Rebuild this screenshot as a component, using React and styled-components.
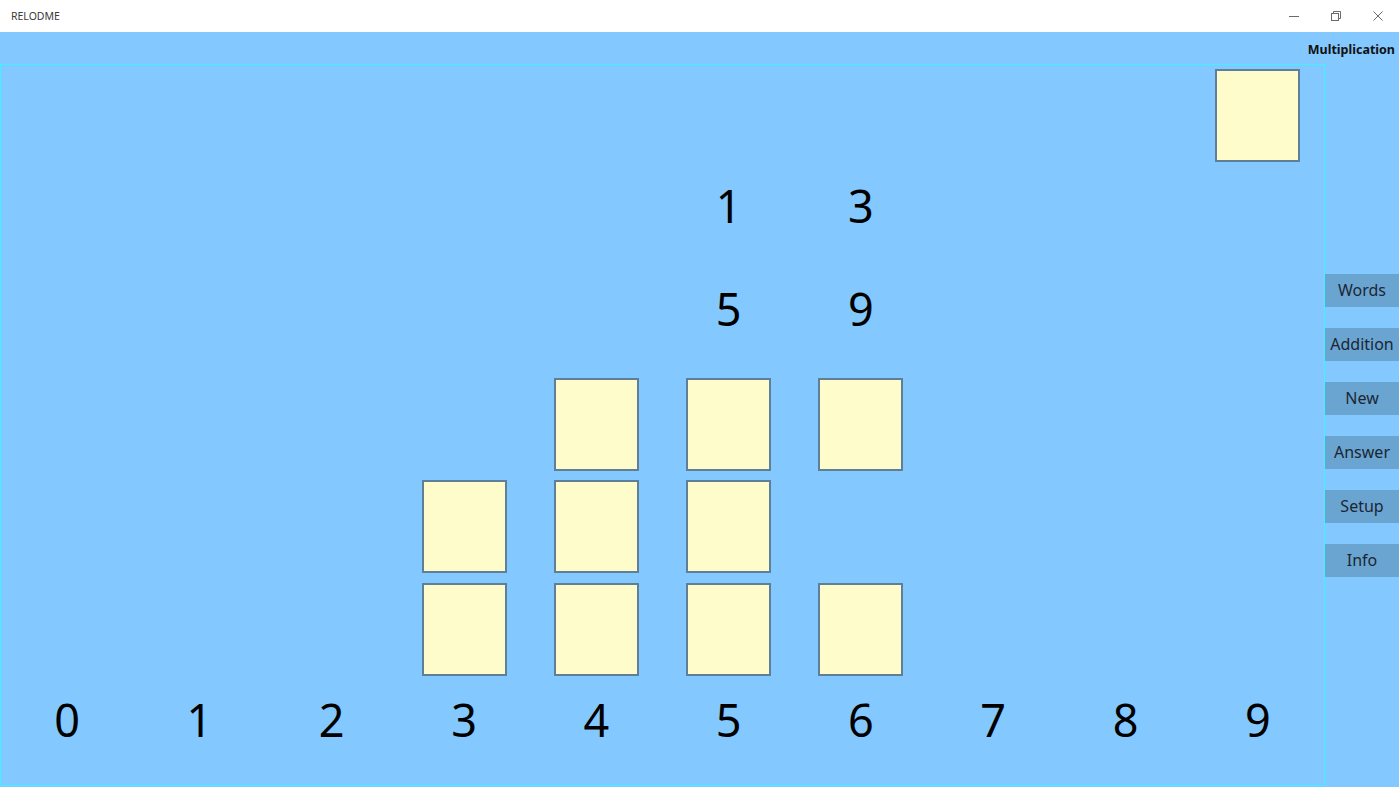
import React from "react";
import styled, {createGlobalStyle} from "styled-components";

const GlobalStyle = createGlobalStyle`
  html, body {
    margin: 0;
    padding: 0;
    overflow: hidden;
    background: #83c8fe;
  }
  * {
    box-sizing: border-box;
  }
`;

const Window = styled.div`
  width: 1399px;
  height: 787px;
  display: flex;
  flex-direction: column;
  font-family: "Noto Sans", "Open Sans", sans-serif;
`;

const TitleBar = styled.div`
  height: 32px;
  background: #ffffff;
  display: flex;
  align-items: center;
  justify-content: space-between;
  padding-left: 11px;
`;

const AppName = styled.span`
  font-size: 10.5px;
  color: #3a3a3a;
`;

const Controls = styled.div`
  display: flex;
  height: 100%;
`;

const ControlButton = styled.div`
  width: 42px;
  height: 100%;
  display: flex;
  align-items: center;
  justify-content: center;
  color: #6a6a6a;
`;

const Main = styled.div`
  flex: 1;
  background: #83c8fe;
  display: grid;
  grid-template-columns: 1325px 1fr;
  grid-template-rows: 32px 722px;
`;

const ModeLabel = styled.div`
  grid-column: 1 / 3;
  display: flex;
  align-items: center;
  justify-content: flex-end;
  padding-right: 4px;
  padding-top: 2px;
  font-size: 12.5px;
  font-weight: 700;
  color: #111;
`;

const Board = styled.div`
  border: 1px solid #3ef2ff;
  display: grid;
  grid-template-columns: repeat(10, 1fr);
  grid-template-rows: repeat(7, 1fr);
`;

const Tile = styled.div`
  grid-row: ${props => props.$row + 1};
  grid-column: ${props => props.$col + 1};
  justify-self: center;
  align-self: start;
  margin-top: 4px;
  width: 85px;
  height: 93px;
  background: #fffccc;
  border: 2px solid #5f7f99;
`;

const Digit = styled.div`
  grid-row: ${props => props.$row + 1};
  grid-column: ${props => props.$col + 1};
  justify-self: center;
  align-self: start;
  font-size: 45px;
  line-height: 76px;
  color: #000;
`;

const Sidebar = styled.div`
  display: flex;
  flex-direction: column;
  justify-content: center;
  gap: 21px;
`;

const SideButton = styled.div`
  height: 33px;
  background: #6aa4d0;
  color: #1c2633;
  font-size: 16px;
  display: flex;
  align-items: center;
  justify-content: center;
`;

const tiles = [
    [0, 9],
    [3, 4], [3, 5], [3, 6],
    [4, 3], [4, 4], [4, 5],
    [5, 3], [5, 4], [5, 5], [5, 6],
];

const digits = [
    [1, 5, "1"], [1, 6, "3"],
    [2, 5, "5"], [2, 6, "9"],
    ...[0, 1, 2, 3, 4, 5, 6, 7, 8, 9].map(n => [6, n, String(n)]),
];

const buttons = ["Words", "Addition", "New", "Answer", "Setup", "Info"];

const App = () => {
    return (
        <Window>
            <GlobalStyle/>
            <TitleBar>
                <AppName>RELODME</AppName>
                <Controls>
                    <ControlButton>
                        <svg width="10" height="10" viewBox="0 0 10 10">
                            <path d="M0 5.5h10" stroke="currentColor" strokeWidth="1" fill="none"/>
                        </svg>
                    </ControlButton>
                    <ControlButton>
                        <svg width="10" height="10" viewBox="0 0 10 10">
                            <rect x="0.5" y="2.5" width="7" height="7" stroke="currentColor" fill="none"/>
                            <path d="M2.5 2.5V0.5h7v7h-2" stroke="currentColor" fill="none"/>
                        </svg>
                    </ControlButton>
                    <ControlButton>
                        <svg width="10" height="10" viewBox="0 0 10 10">
                            <path d="M0.5 0.5l9 9M9.5 0.5l-9 9" stroke="currentColor" strokeWidth="1" fill="none"/>
                        </svg>
                    </ControlButton>
                </Controls>
            </TitleBar>
            <Main>
                <ModeLabel>Multiplication</ModeLabel>
                <Board>
                    {tiles.map(([r, c]) => <Tile key={`t${r}-${c}`} $row={r} $col={c}/>)}
                    {digits.map(([r, c, d]) => <Digit key={`d${r}-${c}`} $row={r} $col={c}>{d}</Digit>)}
                </Board>
                <Sidebar>
                    {buttons.map(b => <SideButton key={b}>{b}</SideButton>)}
                </Sidebar>
            </Main>
        </Window>
    );
};

export default App;
